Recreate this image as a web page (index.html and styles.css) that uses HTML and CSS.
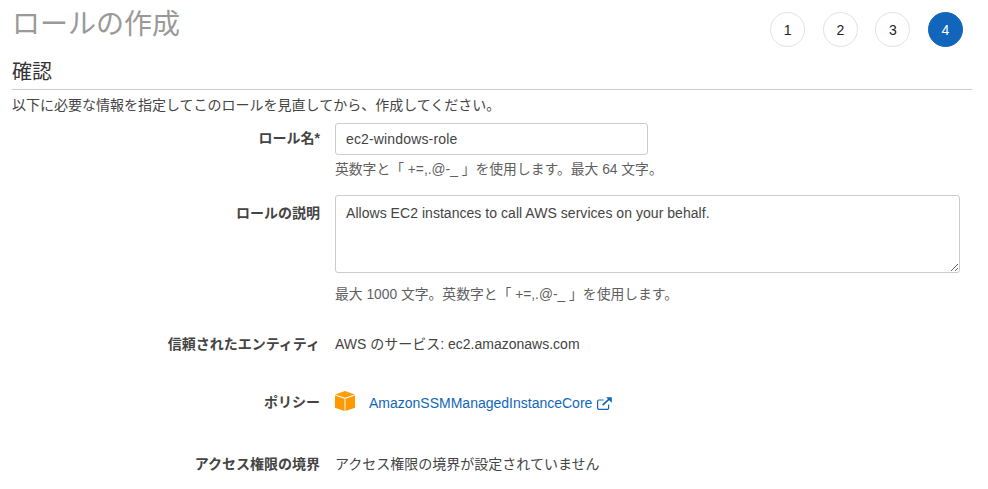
FILE: index.html
```html
<!DOCTYPE html>
<html lang="ja">
<head>
<meta charset="utf-8">
<title>ロールの作成</title>
<link rel="stylesheet" href="styles.css">
</head>
<body>
<div class="page">
  <header class="top">
    <h1 class="title">ロールの作成</h1>
    <ol class="steps">
      <li class="step">1</li>
      <li class="step">2</li>
      <li class="step">3</li>
      <li class="step active">4</li>
    </ol>
  </header>
  <h2 class="section">確認</h2>
  <p class="intro">以下に必要な情報を指定してこのロールを見直してから、作成してください。</p>
  <div class="form">
    <div class="label l-name">ロール名*</div>
    <div class="field f-name">
      <input class="input" type="text" value="ec2-windows-role">
      <p class="hint">英数字と「 +=,.@-_ 」を使用します。最大 64 文字。</p>
    </div>
    <div class="label l-desc">ロールの説明</div>
    <div class="field f-desc">
      <textarea class="area">Allows EC2 instances to call AWS services on your behalf.</textarea>
      <p class="hint hint-desc">最大 1000 文字。英数字と「 +=,.@-_ 」を使用します。</p>
    </div>
    <div class="label l-trust">信頼されたエンティティ</div>
    <div class="field f-trust">AWS のサービス: ec2.amazonaws.com</div>
    <div class="label l-policy">ポリシー</div>
    <div class="field f-policy">
      <svg class="cube" viewBox="0 0 20 20" aria-hidden="true">
        <path d="M10 0 20 3.4 10 6.8 0 3.4Z" fill="#ff9d0a"/>
        <path d="M0 4.4 9.5 7.7V20L0 16.8Z" fill="#ff9900"/>
        <path d="M20 4.4 10.5 7.7V20L20 16.8Z" fill="#ff9900"/>
      </svg>
      <a class="link" href="#">AmazonSSMManagedInstanceCore</a>
      <svg class="ext" viewBox="0 0 15 13" aria-hidden="true">
        <path d="M11.6 7.6V11a1.4 1.4 0 0 1-1.4 1.4H2A1.4 1.4 0 0 1 .6 11V4.4A1.4 1.4 0 0 1 2 3h4.6" fill="none" stroke="#1166bb" stroke-width="1.2"/>
        <path d="M5.6 8.2 12.4 1.9" fill="none" stroke="#1166bb" stroke-width="1.6"/>
        <path d="M9 .2H14.8V5.8Z" fill="#1166bb"/>
      </svg>
    </div>
    <div class="label l-bound">アクセス権限の境界</div>
    <div class="field f-bound">アクセス権限の境界が設定されていません</div>
  </div>
</div>
</body>
</html>
```

FILE: styles.css
```css
html, body {
  margin: 0;
  padding: 0;
  background: #fff;
}
body {
  font-family: "Liberation Sans", "Noto Sans CJK JP", sans-serif;
  font-size: 14px;
  color: #444;
  height: 489px;
  overflow: hidden;
}
.page {
  padding: 0 16px 0 12px;
}
.top {
  display: flex;
  justify-content: space-between;
  align-items: flex-start;
  height: 52px;
}
.title {
  margin: 7px 0 0;
  font-size: 28px;
  line-height: 36px;
  font-weight: 400;
  color: #999;
}
.steps {
  display: flex;
  gap: 17.6px;
  list-style: none;
  margin: 12px 9px 0 0;
  padding: 0;
}
.step {
  box-sizing: border-box;
  width: 35px;
  height: 35px;
  border: 1px solid #e2e2e2;
  border-radius: 50%;
  display: flex;
  align-items: center;
  justify-content: center;
  font-size: 14px;
  color: #222;
  background: #fff;
}
.step.active {
  background: #1166bb;
  border-color: #1166bb;
  color: #fff;
}
.section {
  margin: 5px 0 0;
  height: 33px;
  box-sizing: border-box;
  padding-top: 1px;
  font-size: 20px;
  line-height: 28px;
  font-weight: 400;
  color: #333;
  border-bottom: 1px solid #ccc;
}
.intro {
  margin: 5px 0 0;
  line-height: 20px;
  font-size: 14px;
  color: #444;
}
.form {
  display: grid;
  grid-template-columns: 308px 625px;
  column-gap: 15px;
  margin-top: 8px;
}
.label {
  text-align: right;
  font-weight: 700;
  line-height: 20px;
  color: #444;
}
.field {
  line-height: 20px;
}
.input {
  display: block;
  box-sizing: border-box;
  width: 313px;
  height: 32px;
  padding: 0 10px;
  border: 1px solid #ccc;
  border-radius: 3px;
  font: inherit;
  letter-spacing: 0.15px;
  color: #444;
}
.area {
  display: block;
  box-sizing: border-box;
  width: 625px;
  height: 78px;
  padding: 7px 10px;
  border: 1px solid #ccc;
  border-radius: 3px;
  font: inherit;
  line-height: 20px;
  letter-spacing: 0.04px;
  color: #444;
}
.hint {
  margin: 5px 0 0;
  font-size: 13.8px;
  line-height: 20px;
  color: #5f5f5f;
}
.hint-desc { margin-top: 12px; }
.l-name { padding-top: 5px; }
.f-name { height: 72px; }
.l-desc { padding-top: 8px; }
.f-desc { height: 139px; }
.f-trust, .l-trust { height: 56px; }
.f-policy {
  display: flex;
  align-items: flex-start;
  height: 22px;
  margin-bottom: 42px;
}
.l-policy {
  height: 22px;
  padding-top: 2px;
}
.cube {
  width: 20px;
  height: 20px;
  margin-top: 1px;
  margin-right: 14px;
  flex: none;
}
.link {
  color: #1166bb;
  text-decoration: none;
  margin-top: 3px;
}
.ext {
  width: 15px;
  height: 13px;
  margin-top: 7px;
  margin-left: 5px;
  flex: none;
}
```
